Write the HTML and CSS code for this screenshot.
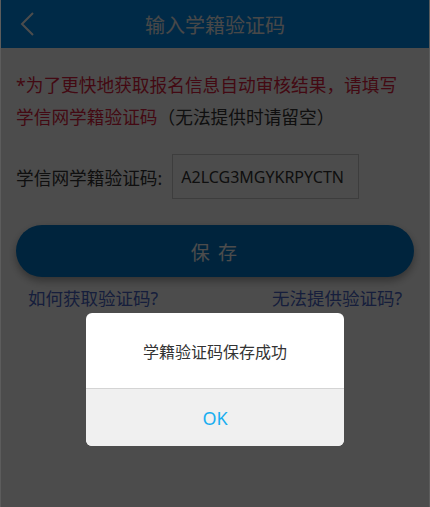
FILE: index.html
```html
<!DOCTYPE html>
<html lang="zh-CN">
<head>
  <meta charset="UTF-8" />
  <title>输入学籍验证码</title>
  <link rel="stylesheet" href="styles.css">
</head>
<body>

<div class="app">
  <div class="header">
    <a class="back" href="#">
      <svg width="16" height="24" viewBox="0 0 16 24"><path d="M14 1 L3 12 L14 23" fill="none" stroke="#fff" stroke-width="2"/></svg>
    </a>
    <h1>输入学籍验证码</h1>
  </div>

  <div class="content">
    <p class="notice">
      <span class="red">*为了更快地获取报名信息自动审核结果，请填写</span><br>
      <span class="red">学信网学籍验证码</span><span>（无法提供时请留空）</span>
    </p>

    <div class="field">
      <label for="code">学信网学籍验证码:</label>
      <input type="text" id="code" value="A2LCG3MGYKRPYCTN">
    </div>

    <button class="save">保 存</button>

    <div class="links">
      <a href="#">如何获取验证码?</a>
      <a href="#">无法提供验证码?</a>
    </div>
  </div>

  <div class="mask"></div>

  <div class="dialog">
    <div class="dialog-msg">学籍验证码保存成功</div>
    <div class="dialog-btn">OK</div>
  </div>
</div>

</body>
</html>
```

FILE: styles.css
```css
html, body {
  margin: 0;
  padding: 0;
  height: 100%;
}
body {
  font-family: "Noto Sans", "Noto Sans CJK SC", sans-serif;
  background: #fff;
  color: #333;
}
.app {
  position: relative;
  height: 100%;
  border-left: 1px solid #5c5c5c;
  border-right: 1px solid #5c5c5c;
  box-sizing: border-box;
  background: #fff;
}
.header {
  height: 48px;
  background: #008ced;
  display: flex;
  align-items: center;
  justify-content: center;
  position: relative;
}
.back {
  position: absolute;
  left: 18px;
  top: 12px;
}
.header h1 {
  margin: 0;
  font-size: 20px;
  font-weight: normal;
  color: #f2f2f2;
}
.content {
  padding: 21px 15px 0;
}
.notice {
  margin: 0;
  font-size: 17.7px;
  line-height: 32px;
  color: #333;
}
.red {
  color: #e01e40;
}
.field {
  display: flex;
  align-items: center;
  margin-top: 21px;
  font-size: 17.7px;
}
.field label {
  color: #333;
  white-space: nowrap;
  margin-right: 10px;
}
.field input {
  width: 187px;
  height: 45px;
  box-sizing: border-box;
  border: 1px solid #ccc;
  padding: 0 8px;
  font-family: "Noto Sans", sans-serif;
  font-size: 16px;
  color: #333;
  outline: none;
}
.save {
  display: block;
  width: 100%;
  height: 52px;
  margin-top: 26px;
  border: none;
  border-radius: 26px;
  background: #0078cc;
  color: #fff;
  font-family: "Noto Sans CJK SC", sans-serif;
  font-size: 19px;
  letter-spacing: 2px;
  box-shadow: 0 4px 8px rgba(0,0,0,0.35);
}
.links {
  display: flex;
  justify-content: space-between;
  padding: 0 12px;
  margin-top: 9px;
  font-size: 17.5px;
  line-height: 24px;
}
.links a {
  color: #4a66c8;
  text-decoration: none;
}
.mask {
  position: absolute;
  inset: 0;
  background: rgba(0,0,0,0.7);
}
.dialog {
  position: absolute;
  left: 85px;
  top: 313px;
  width: 258px;
  border-radius: 6px;
  overflow: hidden;
  background: #fff;
}
.dialog-msg {
  height: 75px;
  display: flex;
  align-items: center;
  justify-content: center;
  font-size: 16px;
  color: #333;
  border-bottom: 1px solid #d4d4d4;
}
.dialog-btn {
  height: 57px;
  display: flex;
  align-items: center;
  justify-content: center;
  background: #f0f0f0;
  color: #1aaef0;
  font-size: 18px;
}
```
